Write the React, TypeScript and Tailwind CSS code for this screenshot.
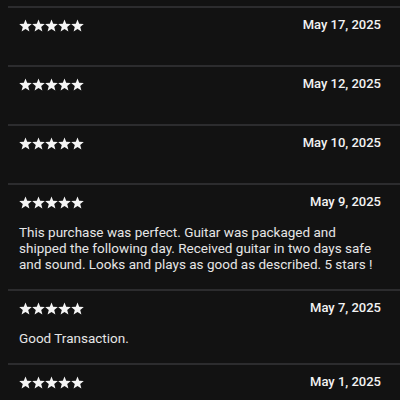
const reviews = [
  { date: "May 17, 2025", text: "" },
  { date: "May 12, 2025", text: "" },
  { date: "May 10, 2025", text: "" },
  {
    date: "May 9, 2025",
    text: "This purchase was perfect. Guitar was packaged and shipped the following day. Received guitar in two days safe and sound. Looks and plays as good as described. 5 stars !",
  },
  { date: "May 7, 2025", text: "Good Transaction." },
  { date: "May 1, 2025", text: "" },
];

function Star() {
  return (
    <svg width="13" height="13" viewBox="0 0 24 24" fill="#f5f5f5">
      <polygon points="12,0.8 15.1,8.6 23.6,9.2 17,14.6 19.2,23 12,18.4 4.8,23 7,14.6 0.4,9.2 8.9,8.6" />
    </svg>
  );
}

function Stars() {
  return (
    <div className="flex">
      {[0, 1, 2, 3, 4].map((i) => (
        <Star key={i} />
      ))}
    </div>
  );
}

export default function App() {
  return (
    <div className="w-[400px] h-[400px] overflow-hidden bg-[#121212] pt-[6px] font-['Roboto',sans-serif] text-[#ececec]">
      {reviews.map((r) => (
        <div
          key={r.date}
          className={`ml-2 border-t-2 border-[#2c2c2e] pl-[11px] pr-[19px] pt-[7px] ${r.text ? "pb-[17px]" : "pb-[30px]"}`}
        >
          <div className="h-5 flex items-center justify-between">
            <Stars />
            <span className="text-[13px] font-medium text-[#f2f2f2]">{r.date}</span>
          </div>
          {r.text && (
            <p className="mt-[12px] text-[13.5px] leading-[16px] text-[#e6e6e6]">{r.text}</p>
          )}
        </div>
      ))}
    </div>
  );
}
